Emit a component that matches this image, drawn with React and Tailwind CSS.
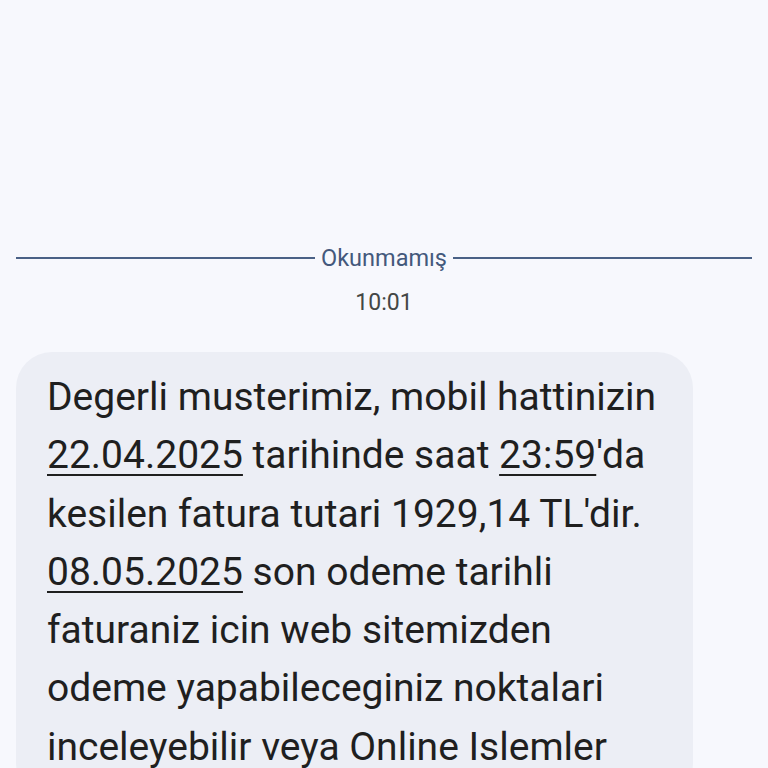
import React from 'react';

const U = ({ children }) => (
  <span className="underline decoration-2 underline-offset-[6px]">{children}</span>
);

export default function App() {
  return (
    <div className="min-h-screen w-full bg-[#f7f8fd] overflow-hidden font-['Roboto',sans-serif]">
      <div className="pt-[246px] px-4">
        {/* unread divider */}
        <div className="flex items-center gap-[6px]">
          <div className="h-[2px] flex-1 bg-[#4a6186]" />
          <span className="text-[23.5px] leading-6 text-[#44597c]">Okunmamış</span>
          <div className="h-[2px] flex-1 bg-[#4a6186]" />
        </div>
        <div className="mt-[21px] text-center text-[23px] leading-6 text-[#444746]">10:01</div>

        <div className="mt-[37px] w-[677px] rounded-[36px] bg-[#eceef5] pl-[31px] pr-4 pt-[16px] pb-6">
          <p className="whitespace-nowrap text-[39px] leading-[58.3px] text-[#1f1f1f]">
            Degerli musterimiz, mobil hattinizin
            <br />
            <U>22.04.2025</U> tarihinde saat <U>23:59</U>'da
            <br />
            kesilen fatura tutari 1929,14 TL'dir.
            <br />
            <U>08.05.2025</U> son odeme tarihli
            <br />
            faturaniz icin web sitemizden
            <br />
            odeme yapabileceginiz noktalari
            <br />
            inceleyebilir veya Online Islemler
          </p>
        </div>
      </div>
    </div>
  );
}
